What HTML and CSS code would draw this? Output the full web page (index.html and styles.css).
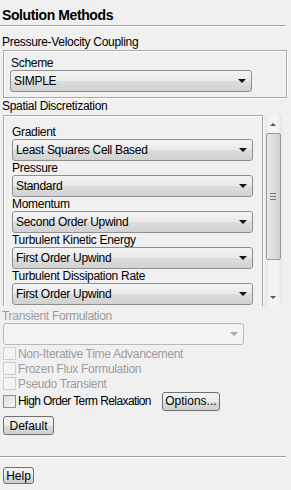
FILE: index.html
```html
<!DOCTYPE html>
<html lang="en">
<head>
    <meta charset="UTF-8">
    <title>Solution Methods</title>
    <link rel="stylesheet" href="styles.css">
</head>
<body>
<div class="panel">
    <div class="title">Solution Methods</div>
    <div class="sep"></div>

    <div class="label top">Pressure-Velocity Coupling</div>
    <div class="group">
        <div class="label">Scheme</div>
        <div class="combo wide"><span>SIMPLE</span><i class="arrow"></i></div>
    </div>

    <div class="label">Spatial Discretization</div>
    <div class="scrollarea">
        <div class="viewport">
            <div class="group open">
                <div class="label">Gradient</div>
                <div class="combo"><span>Least Squares Cell Based</span><i class="arrow"></i></div>
                <div class="label">Pressure</div>
                <div class="combo"><span>Standard</span><i class="arrow"></i></div>
                <div class="label">Momentum</div>
                <div class="combo"><span>Second Order Upwind</span><i class="arrow"></i></div>
                <div class="label">Turbulent Kinetic Energy</div>
                <div class="combo"><span>First Order Upwind</span><i class="arrow"></i></div>
                <div class="label">Turbulent Dissipation Rate</div>
                <div class="combo"><span>First Order Upwind</span><i class="arrow"></i></div>
            </div>
        </div>
        <div class="vscroll">
            <i class="sarrow up"></i>
            <div class="thumb"><span class="grip"></span></div>
            <i class="sarrow down"></i>
        </div>
    </div>

    <div class="label disabled trans">Transient Formulation</div>
    <div class="combo off"><span></span><i class="arrow"></i></div>

    <div class="check disabled"><i class="box"></i>Non-Iterative Time Advancement</div>
    <div class="check disabled"><i class="box"></i>Frozen Flux Formulation</div>
    <div class="check disabled"><i class="box"></i>Pseudo Transient</div>
    <div class="check last"><i class="box"></i><span class="hotr">High Order Term Relaxation</span>
        <button class="btn options">Options...</button>
    </div>

    <button class="btn default">Default</button>
    <div class="sep bottom"></div>
    <button class="btn help">Help</button>
</div>
</body>
</html>
```

FILE: styles.css
```css
/* whole panel: windows grey background */
body {
    margin: 0;
    background-color: #f0f0f0;
    font-family: "Liberation Sans", Arial, sans-serif;
    font-size: 12px;
    letter-spacing: -0.3px;
    color: #000;
}

.panel {
    width: 291px;
    height: 490px;
    overflow: hidden;
}

.title {
    font-size: 14px;
    font-weight: bold;
    letter-spacing: -0.4px;
    line-height: 16px;
    padding: 7px 0 2px 2px;
}

/* etched line */
.sep {
    width: 286px;
    height: 0;
    border-top: 1px solid #a0a0a0;
    border-bottom: 1px solid #fff;
}

.label {
    line-height: 14px;
    padding-left: 2px;
}

.label.top {
    margin-top: 8px;
    margin-bottom: 1px;
}

.group {
    margin-left: 3px;
    width: 276px;
    border: 1px solid #a9a9a9;
    box-shadow: inset 1px 1px 0 #fff, 1px 1px 0 #fff;
    padding: 5px 0 5px 6px;
    margin-bottom: 1px;
}

.group .label {
    padding-left: 1px;
}

.combo {
    position: relative;
    box-sizing: border-box;
    height: 22px;
    width: 241px;
    border: 1px solid #8e8f8f;
    border-radius: 3px;
    background: linear-gradient(#f4f4f4, #e9e9e9 50%, #dcdcdc 51%, #d2d2d2);
    line-height: 20px;
    padding-left: 3px;
}

.combo.wide {
    width: 242px;
}

.arrow {
    position: absolute;
    right: 5px;
    top: 8px;
    width: 0;
    height: 0;
    border-left: 4px solid transparent;
    border-right: 4px solid transparent;
    border-top: 4px solid #111;
}

/* scrolling part */
.scrollarea {
    display: flex;
    margin-top: 2px;
    height: 191px;
}

.viewport {
    width: 263px;
    overflow: hidden;
}

.group.open {
    width: 250px;
    border-bottom: none;
    padding: 9px 0 0 8px;
    height: 200px;
}

.group.open .label {
    padding-left: 0;
}

.vscroll {
    position: relative;
    margin-left: 2px;
    width: 17px;
    background: linear-gradient(90deg, #e6e6e6, #f4f4f4 30%, #f4f4f4 70%, #e6e6e6);
}

.sarrow {
    position: absolute;
    left: 5px;
    width: 0;
    height: 0;
    border-left: 3px solid transparent;
    border-right: 3px solid transparent;
}

.sarrow.up {
    top: 8px;
    border-bottom: 3px solid #555;
}

.sarrow.down {
    bottom: 7px;
    border-top: 3px solid #555;
}

.thumb {
    position: absolute;
    left: 1px;
    top: 18px;
    width: 13px;
    height: 125px;
    border: 1px solid #9a9a9a;
    border-radius: 2px;
    background: linear-gradient(90deg, #e8e8e8, #dcdcdc 50%, #cfcfcf);
}

.grip {
    position: absolute;
    left: 3px;
    top: 59px;
    width: 6px;
    height: 5px;
    border-top: 1px solid #777;
    border-bottom: 1px solid #777;
}

.grip::after {
    content: "";
    position: absolute;
    left: 0;
    top: 2px;
    width: 6px;
    border-top: 1px solid #777;
}

/* disabled stuff */
.disabled {
    color: #9c9c9c;
}

.label.trans {
    margin-top: 3px;
}

.combo.off {
    margin-left: 3px;
    background: #f3f3f3;
    border-color: #b5b9bc;
    margin-bottom: 1px;
}

.combo.off .arrow {
    border-top-color: #a8a8a8;
}

.check {
    display: flex;
    align-items: center;
    height: 15px;
    padding-left: 3px;
}

.box {
    box-sizing: border-box;
    width: 13px;
    height: 13px;
    margin-right: 2px;
    border: 1px solid #8e8f8f;
    background: linear-gradient(135deg, #dcdcdc, #f8f8f8);
}

.check.disabled .box {
    border-color: #d0d0d0;
    background: #f4f4f4;
}

.check.last {
    height: 20px;
}

.hotr {
    letter-spacing: -0.6px;
}

/* buttons */
.btn {
    font-family: "Liberation Sans", Arial, sans-serif;
    font-size: 12px;
    letter-spacing: 0;
    color: #000;
    border: 1px solid #707070;
    border-radius: 3px;
    background: linear-gradient(#f2f2f2, #ebebeb 50%, #dddddd 51%, #cfcfcf);
    padding: 0;
}

.options {
    margin-left: 11px;
    width: 58px;
    height: 19px;
}

.default {
    display: block;
    margin: 5px 0 0 3px;
    width: 51px;
    height: 19px;
}

.sep.bottom {
    margin-top: 21px;
}

.help {
    display: block;
    margin: 9px 0 0 3px;
    width: 31px;
    height: 17px;
}
```
